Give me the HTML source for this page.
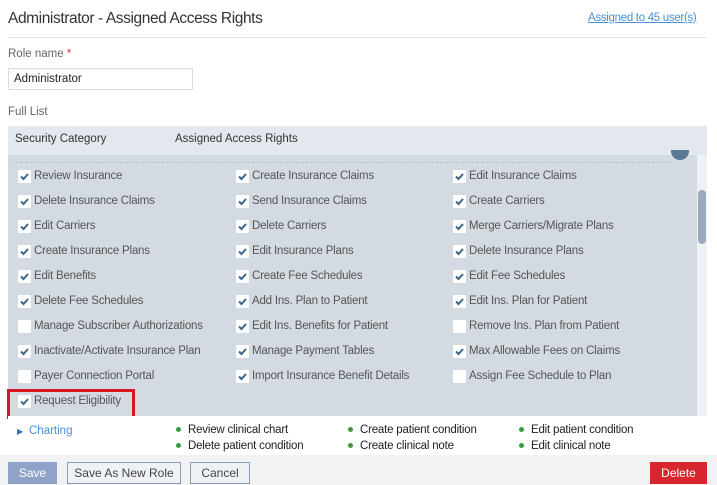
<!DOCTYPE html>
<html><head><style>
*{box-sizing:border-box;margin:0;padding:0}
body{width:717px;height:485px;overflow:hidden;background:#fff;font-family:"Liberation Sans",sans-serif;position:relative;color:#333}
.a{position:absolute;white-space:nowrap}
.cb{position:absolute;width:13px;height:13px;background:#fff;border-radius:1px}
.cb svg{position:absolute;left:1px;top:1px}
.t{position:absolute;font-size:11.5px;color:#555;letter-spacing:-0.2px}
.btn{position:absolute;top:462px;height:22px;font-size:12px;text-align:center;line-height:20px;border:1px solid #8a9bb5;background:#eef1f6;color:#444}
.dot{display:inline-block;width:5px;height:5px;border-radius:50%;background:#3c9a3c;margin-right:7px;vertical-align:middle}
.c{position:absolute;font-size:11.5px;color:#222;letter-spacing:-0.2px}
</style></head><body>
<div class="a" style="left:8px;top:10px;font-size:15.5px;color:#333;letter-spacing:-0.4px">Administrator - Assigned Access Rights</div>
<div class="a" style="left:588px;top:12px;font-size:11.5px;color:#4a8fd8;text-decoration:underline;letter-spacing:-0.3px">Assigned to 45 user(s)</div>
<div class="a" style="left:8px;top:37px;width:699px;height:1px;background:#e3e3e3"></div>
<div class="a" style="left:8px;top:48px;font-size:11.5px;color:#666">Role name <span style="color:#d33">*</span></div>
<div class="a" style="left:8px;top:68px;width:185px;height:22px;border:1px solid #d8dde5;font-size:11.5px;padding:4px 5px;color:#222">Administrator</div>
<div class="a" style="left:8px;top:106px;font-size:11.5px;color:#666">Full List</div>
<div class="a" style="left:8px;top:126px;width:699px;height:29px;background:#e3e7ee"></div>
<div class="a" style="left:15px;top:133px;font-size:11.5px;color:#333">Security Category</div>
<div class="a" style="left:175px;top:133px;font-size:11.5px;color:#333">Assigned Access Rights</div>
<div class="a" style="left:8px;top:155px;width:699px;height:261px;background:#d3dae2"></div>
<div class="a" style="left:15px;top:162px;width:255px;border-top:1px dashed #b8c0cb"></div>
<div class="a" style="left:270px;top:162px;width:400px;border-top:1px dashed #b8c0cb"></div>
<div class="a" style="left:671px;top:150px;width:18px;height:10px;border-radius:0 0 9px 9px;background:#5a7894"></div>
<div class="a" style="left:697px;top:155px;width:10px;height:261px;background:#eef1f5"></div>
<div class="a" style="left:698px;top:190px;width:8px;height:54px;border-radius:4px;background:#9ba9bc"></div>
<div id="rows"></div>
<div class="a" style="left:7px;top:389px;width:128px;height:30px;border:3px solid #d7161f"></div>
<div class="a" style="left:8px;top:416px;width:689px;height:39px;background:#fff"></div>
<div class="a" style="left:17px;top:427px;font-size:8px;color:#3a6fb0">▶</div>
<div class="a" style="left:29px;top:425px;font-size:11.5px;color:#4a8fd8">Charting</div>
<div class="c" style="left:176px;top:424px"><span class="dot"></span>Review clinical chart</div>
<div class="c" style="left:348px;top:424px"><span class="dot"></span>Create patient condition</div>
<div class="c" style="left:519px;top:424px"><span class="dot"></span>Edit patient condition</div>
<div class="c" style="left:176px;top:440px"><span class="dot"></span>Delete patient condition</div>
<div class="c" style="left:348px;top:440px"><span class="dot"></span>Create clinical note</div>
<div class="c" style="left:519px;top:440px"><span class="dot"></span>Edit clinical note</div>
<div class="a" style="left:0;top:455px;width:717px;height:30px;background:#f2f2f2"></div>
<div class="btn" style="left:8px;width:49px;background:#8fa3c8;border-color:#8fa3c8;color:#fff">Save</div>
<div class="btn" style="left:67px;width:114px">Save As New Role</div>
<div class="btn" style="left:190px;width:60px">Cancel</div>
<div class="btn" style="left:650px;width:57px;background:#d7262e;border-color:#d7262e;color:#fff">Delete</div>
<script>
var d=[["Review Insurance",1,"Create Insurance Claims",1,"Edit Insurance Claims",1],
["Delete Insurance Claims",1,"Send Insurance Claims",1,"Create Carriers",1],
["Edit Carriers",1,"Delete Carriers",1,"Merge Carriers/Migrate Plans",1],
["Create Insurance Plans",1,"Edit Insurance Plans",1,"Delete Insurance Plans",1],
["Edit Benefits",1,"Create Fee Schedules",1,"Edit Fee Schedules",1],
["Delete Fee Schedules",1,"Add Ins. Plan to Patient",1,"Edit Ins. Plan for Patient",1],
["Manage Subscriber Authorizations",0,"Edit Ins. Benefits for Patient",1,"Remove Ins. Plan from Patient",0],
["Inactivate/Activate Insurance Plan",1,"Manage Payment Tables",1,"Max Allowable Fees on Claims",1],
["Payer Connection Portal",0,"Import Insurance Benefit Details",1,"Assign Fee Schedule to Plan",0],
["Request Eligibility",1]];
var xs=[18,236,453],h="";
var ck='<svg width="11" height="11" viewBox="0 0 11 11"><path d="M2 5.5L4.5 8L9 3" fill="none" stroke="#3d6585" stroke-width="2"/></svg>';
d.forEach(function(r,i){var y=170+i*25;for(var j=0;j<r.length;j+=2){var x=xs[j/2];
h+='<div class="cb" style="left:'+x+'px;top:'+y+'px">'+(r[j+1]?ck:'')+'</div><div class="t" style="left:'+(x+16)+'px;top:'+(y+0)+'px">'+r[j]+'</div>';}});
document.getElementById('rows').innerHTML=h;
</script>
</body></html>
